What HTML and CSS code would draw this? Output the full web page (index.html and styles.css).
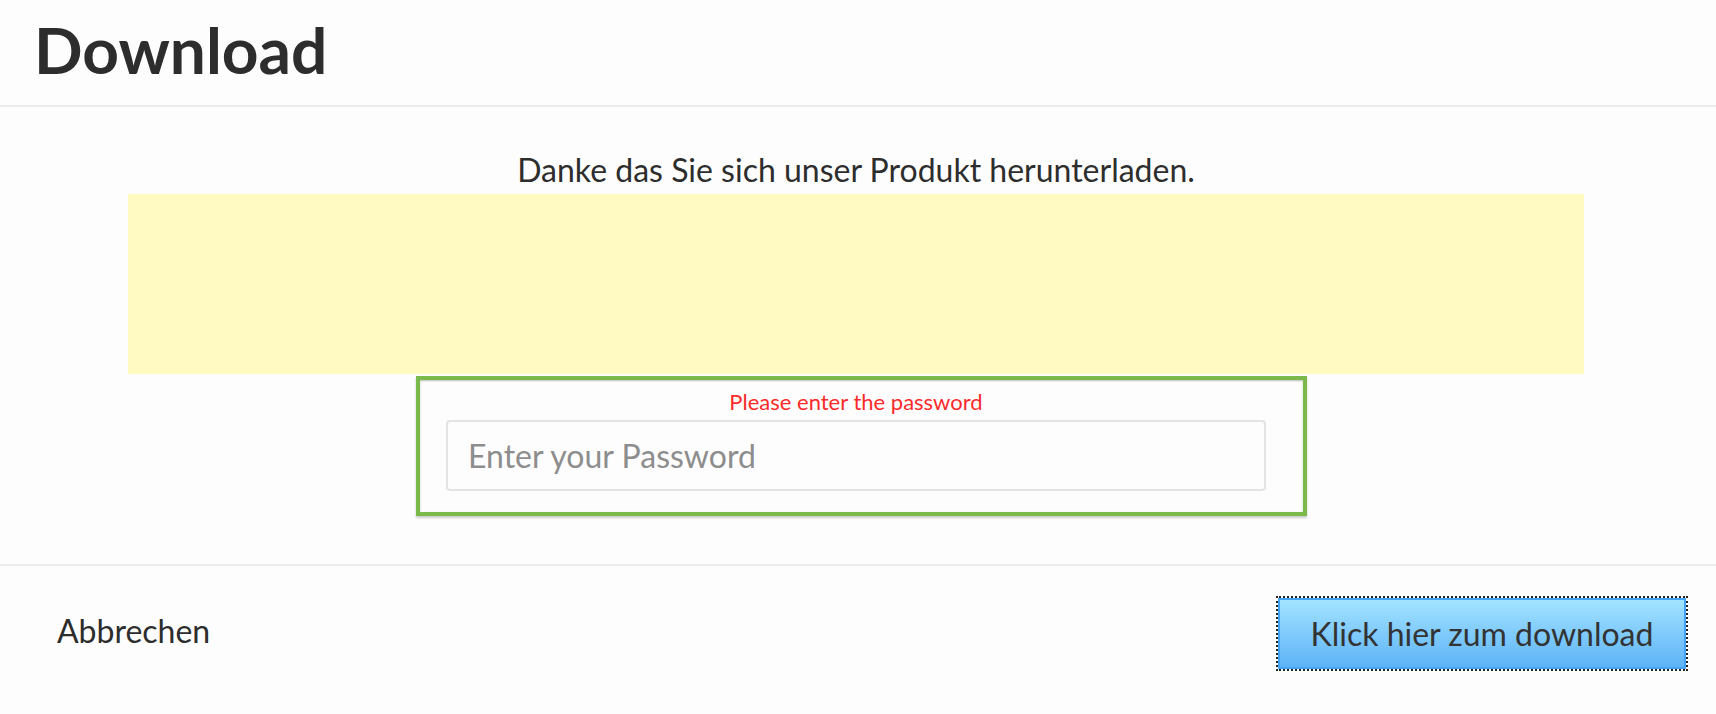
FILE: index.html
```html
<!DOCTYPE html>
<html lang="de">
<head>
<meta charset="utf-8">
<title>Download</title>
<link rel="stylesheet" href="styles.css">
</head>
<body>
<div class="modal">
  <header class="modal-header">
    <h1 class="title">Download</h1>
  </header>
  <section class="modal-body">
    <p class="thanks">Danke das Sie sich unser Produkt herunterladen.</p>
    <div class="notice"></div>
    <div class="pw-box">
      <div class="pw-error">Please enter the password</div>
      <input class="pw-input" type="password" placeholder="Enter your Password">
    </div>
  </section>
  <footer class="modal-footer">
    <span class="cancel">Abbrechen</span>
    <button class="download-btn" type="button">Klick hier zum download</button>
  </footer>
</div>
</body>
</html>
```
FILE: styles.css
```css
html, body {
  margin: 0;
  padding: 0;
  background: #fdfdfd;
}
body {
  font-family: Lato, "Open Sans", "Liberation Sans", sans-serif;
  color: #333;
  width: 1716px;
  height: 714px;
  overflow: hidden;
}
.modal {
  display: flex;
  flex-direction: column;
}
.modal-header {
  padding: 12px 0 16px 34px;
  border-bottom: 2px solid #ececec;
}
.title {
  margin: 0;
  font-size: 64px;
  font-weight: 700;
  line-height: 1.2;
  color: #2d2d2d;
}
.modal-body {
  padding: 44px 132px 48px 128px;
  border-bottom: 2px solid #ececec;
}
.thanks {
  margin: 0 0 5px;
  font-size: 32px;
  line-height: 1.2;
  text-align: center;
  color: #2d2d2d;
}
.notice {
  height: 180px;
  background: #fff9c2;
}
.pw-box {
  box-sizing: border-box;
  width: 891px;
  height: 140px;
  margin: 2px 0 0 288px;
  padding: 9px 37px 0 26px;
  border: 4px solid #7bb94a;
  box-shadow: inset 0 1px 2px rgba(0,0,0,0.25), 0 2px 2px rgba(0,0,0,0.2);
  display: flex;
  flex-direction: column;
  align-items: stretch;
  gap: 4px;
}
.pw-error {
  font-size: 22px;
  line-height: 1.2;
  color: #fb2b2b;
  text-align: center;
}
.pw-input {
  box-sizing: border-box;
  height: 71px;
  margin: 0;
  padding: 0 20px;
  border: 2px solid #e3e3e3;
  border-radius: 4px;
  background: #fdfdfd;
  font-family: inherit;
  font-size: 32px;
  color: #333;
  outline: none;
}
.pw-input::placeholder {
  color: #8d8d8d;
}
.modal-footer {
  display: flex;
  justify-content: space-between;
  align-items: center;
  padding: 32px 30px 44px 57px;
}
.cancel {
  font-size: 32px;
  line-height: 1.2;
  color: #2d2d2d;
  margin-bottom: 4px;
}
.download-btn {
  box-sizing: border-box;
  width: 408px;
  height: 71px;
  padding: 0 20px;
  border: 2px solid #43a4f6;
  border-radius: 0;
  background: linear-gradient(to bottom, #a2e3ff 0%, #5eb3f8 100%);
  font-family: inherit;
  font-size: 32px;
  color: #333;
  outline: 2px dotted #222;
  outline-offset: 0;
  cursor: pointer;
}
```
